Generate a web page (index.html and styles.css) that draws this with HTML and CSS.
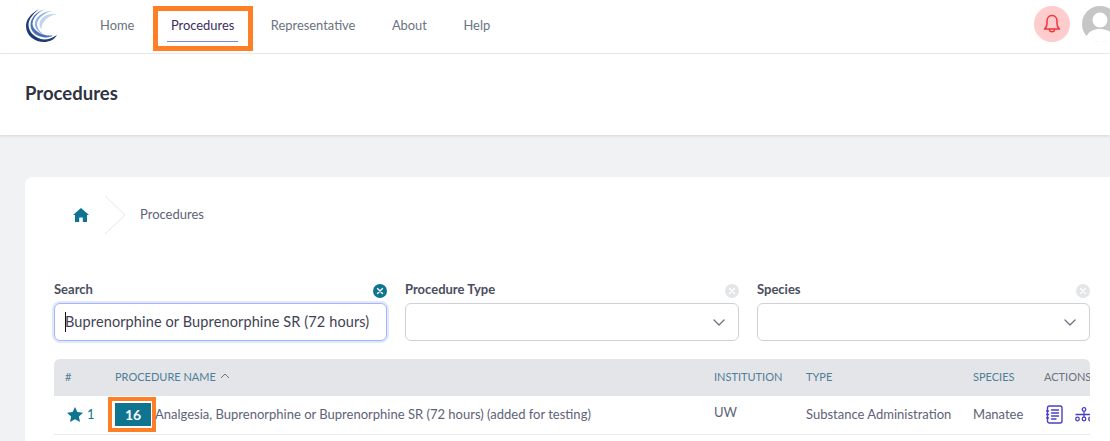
FILE: index.html
```html
<!DOCTYPE html>
<html lang="en">
<head>
<meta charset="utf-8">
<title>Procedures</title>
<link rel="stylesheet" href="styles.css">
</head>
<body>
<header class="topbar">
  <svg class="logo" width="34" height="35" viewBox="0 0 34 35">
    <path d="M14 1C5 6 1 12 1 18C1 28 10 34 19 34C24 34 29 32 32 27C27 30 23 31.500 19 31.500C10 30.500 3.500 24 3.500 17C3.500 11 8 6 14 1Z" fill="#1d3b73"/>
    <path d="M20 1C11 4 5.500 10 5.500 17C5.500 24 12 29 20 29.500C23 29.500 26 29 28 27.500C19 28.500 7.500 23 7.500 16C7.500 10 13 4 20 1Z" fill="#4a72b5"/>
    <path d="M28 3C18 3 10 9 10 16C10 20 13 24 18 26C14 23 12 20 12 16C12.500 10 20 4 28 3Z" fill="#8fb0e0"/>
    <path d="M32 6C24 5 14.500 9 14.500 16C14.500 18 15.500 20 16.500 21.500C16 14 24 7 32 6Z" fill="#c0d4ef"/>
  </svg>
  <nav class="nav">
    <a class="nav-item">Home</a>
    <a class="nav-item active">Procedures</a>
    <a class="nav-item">Representative</a>
    <a class="nav-item">About</a>
    <a class="nav-item">Help</a>
  </nav>
  <div class="top-actions">
    <span class="bell">
      <svg width="18" height="20" viewBox="0 0 18 20" fill="none" stroke="#f0343c" stroke-width="1.500" stroke-linejoin="round" stroke-linecap="round">
        <path d="M9 1.500C5.800 1.500 4 4 4 7V10C4 12 3 13.500 1.500 15H16.500C15 13.500 14 12 14 10V7C14 4 12.200 1.500 9 1.500Z"/>
        <path d="M6.500 15.500C6.500 18.500 11.500 18.500 11.500 15.500"/>
      </svg>
    </span>
    <span class="avatar">
      <svg width="36" height="36" viewBox="0 0 36 36">
        <circle cx="18" cy="18" r="18" fill="#c6c6c6"/>
        <circle cx="18" cy="14" r="7.500" fill="#fff"/>
        <path d="M4 32C6 25 12 23 18 23C24 23 30 25 32 32C28 35 23 36 18 36C13 36 8 35 4 32Z" fill="#fff"/>
      </svg>
    </span>
  </div>
</header>
<span class="mark mark-nav"></span>

<section class="page-title">
  <h1>Procedures</h1>
</section>

<main class="content">
  <div class="card">
    <div class="crumbs">
      <svg class="home" width="16" height="14" viewBox="0 0 16 14"><path d="M8 0L16 7H14V14H9.800V9.500H6.200V14H2V7H0Z" fill="#0f7490"/></svg>
      <svg class="chev" width="22" height="40" viewBox="0 0 22 40" fill="none"><path d="M1 1L21 20L1 39" stroke="#e6e7ea"/></svg>
      <span class="crumb-text">Procedures</span>
    </div>

    <div class="filters">
      <div class="filter">
        <div class="filter-head">
          <label>Search</label>
          <span class="clear on">
            <svg width="14" height="14" viewBox="0 0 14 14"><circle cx="7" cy="7" r="7" fill="#0f7490"/><path d="M4.500 4.500L9.500 9.500M9.500 4.500L4.500 9.500" stroke="#fff" stroke-width="1.400" stroke-linecap="round"/></svg>
          </span>
        </div>
        <div class="field focus"><span class="caret"></span><span>Buprenorphine or Buprenorphine SR (72 hours)</span></div>
      </div>
      <div class="filter">
        <div class="filter-head">
          <label>Procedure Type</label>
          <span class="clear">
            <svg width="14" height="14" viewBox="0 0 14 14"><circle cx="7" cy="7" r="7" fill="#e4e5e9"/><path d="M4.500 4.500L9.500 9.500M9.500 4.500L4.500 9.500" stroke="#fff" stroke-width="1.400" stroke-linecap="round"/></svg>
          </span>
        </div>
        <div class="field select">
          <svg width="12" height="7" viewBox="0 0 12 7" fill="none"><path d="M1 1L6 6L11 1" stroke="#6b7280" stroke-width="1.300" stroke-linecap="round" stroke-linejoin="round"/></svg>
        </div>
      </div>
      <div class="filter">
        <div class="filter-head">
          <label>Species</label>
          <span class="clear">
            <svg width="14" height="14" viewBox="0 0 14 14"><circle cx="7" cy="7" r="7" fill="#e4e5e9"/><path d="M4.500 4.500L9.500 9.500M9.500 4.500L4.500 9.500" stroke="#fff" stroke-width="1.400" stroke-linecap="round"/></svg>
          </span>
        </div>
        <div class="field select">
          <svg width="12" height="7" viewBox="0 0 12 7" fill="none"><path d="M1 1L6 6L11 1" stroke="#6b7280" stroke-width="1.300" stroke-linecap="round" stroke-linejoin="round"/></svg>
        </div>
      </div>
    </div>

    <div class="table">
      <div class="row head">
        <div class="c-num">#</div>
        <div class="c-name">PROCEDURE NAME
          <svg width="10" height="6" viewBox="0 0 10 6" fill="none"><path d="M1 5L5 1L9 5" stroke="#6b7280" stroke-width="1"/></svg>
        </div>
        <div class="c-inst">INSTITUTION</div>
        <div class="c-type">TYPE</div>
        <div class="c-species">SPECIES</div>
        <div class="c-actions dark">ACTIONS</div>
      </div>
      <div class="row body">
        <div class="c-num star-cell">
          <svg width="16" height="15" viewBox="0 0 16 15"><path d="M8 0L10.400 5L16 5.700L11.900 9.500L13 15L8 12.300L3 15L4.100 9.500L0 5.700L5.600 5Z" fill="#0f7490"/></svg>
          <span>1</span>
        </div>
        <div class="c-name name-cell">
          <span class="count-wrap"><span class="count">16</span></span>
          <span>Analgesia, Buprenorphine or Buprenorphine SR (72 hours) (added for testing)</span>
        </div>
        <div class="c-inst inst">UW</div>
        <div class="c-type">Substance Administration</div>
        <div class="c-species">Manatee</div>
        <div class="c-actions icons">
          <svg width="17" height="19" viewBox="0 0 17 19" fill="none" stroke="#4a3fc4" stroke-width="1.400" stroke-linecap="round">
            <rect x="1.500" y="1" width="14.500" height="17" rx="2"/>
            <path d="M5.500 5H12.500M5.500 8H12.500M5.500 11H12.500M5.500 14H10M0.500 6H2.500M0.500 9.500H2.500M0.500 13H2.500"/>
          </svg>
          <svg width="18" height="15" viewBox="0 0 18 15" fill="none" stroke="#4a3fc4" stroke-width="1.300">
            <circle cx="9" cy="2.500" r="1.800"/>
            <path d="M9 4.500V10M0.500 7.500H17.500"/>
            <circle cx="2.500" cy="12" r="1.800"/>
            <circle cx="9" cy="12" r="1.800"/>
            <circle cx="15.500" cy="12" r="1.800"/>
          </svg>
        </div>
      </div>
    </div>
  </div>
</main>
```

FILE: styles.css
```css
* { box-sizing: border-box; }
html, body { margin: 0; padding: 0; }
body {
  position: relative;
  width: 1110px;
  height: 441px;
  overflow: hidden;
  background: #f1f2f4;
  font-family: "Lato", "Open Sans", sans-serif;
  color: #3f4254;
}
.topbar {
  display: flex;
  align-items: flex-start;
  width: 1110px;
  height: 54px;
  padding-left: 25px;
  background: #fff;
  border-bottom: 1px solid #ecedf0;
}
.logo { flex: none; margin-top: 8px; }
.nav { display: flex; margin-left: 22.750px; height: 53px; }
.nav-item {
  position: relative;
  display: flex;
  align-items: center;
  height: 50px;
  padding: 0 18.250px;
  font-size: 12.900px;
  color: #6b7280;
  white-space: nowrap;
}
.nav-item.active { color: #3b2d5c; }
.nav-item.active::after {
  content: "";
  position: absolute;
  left: 14.250px;
  right: 14.250px;
  bottom: 8px;
  border-bottom: 1px solid #8585dc;
}
.top-actions { display: flex; align-items: center; gap: 12px; margin-left: auto; margin-right: -8px; margin-top: 6px; }
.bell {
  display: flex;
  align-items: center;
  justify-content: center;
  width: 36px;
  height: 36px;
  border-radius: 50%;
  background: #ffcccd;
}
.avatar { display: block; height: 36px; width: 36px; }
.mark {
  position: absolute;
  display: block;
  border: 5px solid #ff7f27;
}
.mark-nav { left: 153px; top: 6px; width: 100px; height: 45px; }

.page-title {
  display: flex;
  align-items: center;
  height: 81px;
  padding: 0 0 4px 25px;
  background: #fff;
  box-shadow: 0 1px 3px rgba(0,0,0,.12);
}
.page-title h1 { margin: 0; font-size: 18.500px; font-weight: 700; color: #2f3242; }

.content { height: 306px; padding: 42px 0 0 25px; overflow: hidden; }
.card {
  width: 1110px;
  height: 264px;
  padding: 18px 0 0 29px;
  background: #fff;
  border-radius: 8px 8px 0 0;
}
.crumbs { display: flex; align-items: center; height: 40px; padding-left: 19px; }
.home { flex: none; margin-right: 15px; }
.chev { flex: none; margin-right: 14px; }
.crumb-text { font-size: 13px; color: #5e6278; padding-bottom: 2px; }

.filters { display: grid; grid-template-columns: 333px 334px 333px; column-gap: 18px; margin-top: 45px; width: 1036px; }
.filter-head { display: flex; justify-content: space-between; align-items: center; height: 18px; margin-bottom: 5px; }
.filter-head label { font-size: 13px; font-weight: 700; color: #4a4e5e; }
.clear { display: block; height: 14px; margin-right: 0; }
.field {
  display: flex;
  align-items: center;
  height: 38px;
  border: 1px solid #ced0d6;
  border-radius: 6px;
  background: #fff;
}
.field.focus {
  position: relative;
  padding: 0 0 2px 10px;
  border-color: #a5b4fc;
  box-shadow: 0 0 0 2px #e4e8fb;
  font-size: 14.500px;
  letter-spacing: 0.120px;
  color: #3f4254;
  white-space: nowrap;
}
.caret { position: absolute; left: 10px; top: 8px; height: 20px; border-left: 1px solid #111; }
.field.select { justify-content: flex-end; padding-right: 13px; }

.table { width: 1036px; margin-top: 18px; overflow: hidden; border-radius: 6px 6px 0 0; }
.row { display: flex; align-items: center; }
.head {
  height: 37px;
  padding-bottom: 3px;
  background: #e4e5e9;
  font-size: 11px;
  color: #4f7f96;
}
.body {
  height: 39px;
  padding-bottom: 2px;
  font-size: 13px;
  border-bottom: 1px solid #e9eaed;
  color: #5e6278;
}
.c-num { width: 61px; padding-left: 11px; flex: none; }
.c-name { width: 599px; flex: none; white-space: nowrap; display: flex; align-items: center; gap: 4px; }
.c-inst { width: 92px; flex: none; }
.c-type { width: 167px; flex: none; white-space: nowrap; }
.c-species { width: 71px; flex: none; }
.c-actions { flex: none; white-space: nowrap; }
.dark { color: #6b7280; }
.star-cell { display: flex; align-items: center; gap: 4px; padding-left: 13px; color: #0f7490; }
.name-cell { gap: 0; }
.inst { align-self: flex-start; padding-top: 8px; }
.count-wrap {
  display: block;
  flex: none;
  width: 48px;
  height: 35px;
  margin: 0 -1px 0 -7px;
  padding: 2px 3px;
  border: 4px solid #ff7f27;
}
.count {
  display: flex;
  align-items: center;
  justify-content: center;
  width: 36px;
  height: 23px;
  background: #0f7490;
  color: #fff;
  font-size: 14px;
  font-weight: 700;
}
.icons { display: flex; gap: 12px; align-items: center; margin-left: 2px; }
```
